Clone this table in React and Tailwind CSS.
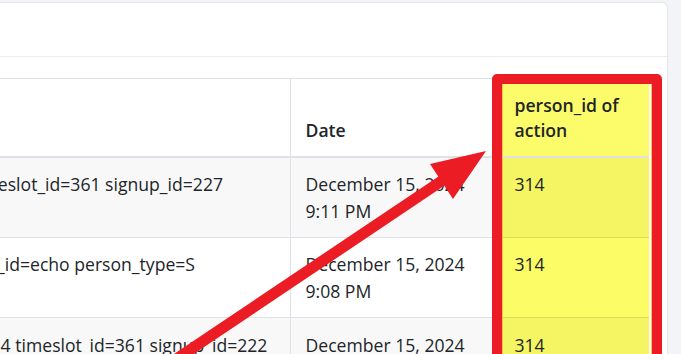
const rows = [
  {
    text: "Unsignup: person_id=314 timeslot_id=361 signup_id=227",
    date: "December 15, 2024",
    time: "9:11 PM",
    pid: "314",
    striped: true,
  },
  {
    text: "Person type changed: person_id=echo person_type=S",
    date: "December 15, 2024",
    time: "9:08 PM",
    pid: "314",
    striped: false,
  },
  {
    text: "Signup created: person_id=314 timeslot_id=361 signup_id=222",
    date: "December 15, 2024",
    time: "9:05 PM",
    pid: "314",
    striped: true,
  },
];

export default function App() {
  return (
    <div className="relative w-[681px] h-[354px] overflow-hidden bg-[#f3f4f7] font-['Open_Sans',sans-serif] text-[#212529]">
      <div className="flex justify-end pt-[2px] pr-[13px]">
        <div className="w-[943px] shrink-0 bg-white border border-[#e4e6ea] rounded-[6px]">
          <div className="h-[54px] border-b border-[#eceef1]" />
          <div className="px-[16px] pt-[21px]">
            <table className="w-[907px] table-fixed border-collapse border-t border-[#dee2e6] text-[17.6px] leading-[26.4px]">
              <colgroup>
                <col className="w-[548px]" />
                <col className="w-[209px]" />
                <col className="w-[150px]" />
              </colgroup>
              <thead>
                <tr>
                  <th className="pl-[16px] pr-[13px] pt-[14px] pb-[14px] align-bottom text-left font-semibold leading-[24.5px] border-b-2 border-[#dee2e6]">
                    Description
                  </th>
                  <th className="pl-[15px] pr-[13px] pt-[14px] pb-[14px] align-bottom text-left font-semibold leading-[24.5px] border-b-2 border-l border-[#dee2e6]">
                    Date
                  </th>
                  <th className="pl-[15px] pr-[13px] pt-[14px] pb-[14px] align-bottom text-left font-semibold leading-[24.5px] border-b-2 border-l border-[#dee2e6] bg-[#fcfc6a]">
                    person_id of
                    <br />
                    action
                  </th>
                </tr>
              </thead>
              <tbody>
                {rows.map((r, i) => (
                  <tr key={i} className={r.striped ? "bg-[#f8f8f8]" : "bg-white"}>
                    <td className="pl-[16px] pr-[13px] py-[13.2px] align-top whitespace-nowrap border-b border-[#dee2e6]">
                      {r.text}
                    </td>
                    <td className="pl-[15px] pr-[13px] py-[13.2px] align-top border-b border-l border-[#dee2e6]">
                      {r.date}
                      <br />
                      {r.time}
                    </td>
                    <td
                      className={
                        r.striped
                          ? "pl-[15px] pr-[13px] py-[13.2px] align-top border-b border-l border-[#dcdc5c] bg-[#f5f563]"
                          : "pl-[15px] pr-[13px] py-[13.2px] align-top border-b border-l border-[#dcdc5c] bg-[#fcfc66]"
                      }
                    >
                      {r.pid}
                    </td>
                  </tr>
                ))}
              </tbody>
            </table>
          </div>
        </div>
      </div>

      {/* annotation: red frame around the person_id column */}
      <div className="absolute left-[492px] top-[74px] w-[170px] h-[320px] border-[10px] border-[#ec1c24] rounded-[5px] shadow-[inset_1px_0_0_#f2c64a,inset_-1px_0_0_#f2c64a]" />

      {/* annotation: arrow pointing at the frame */}
      <svg className="absolute inset-0" width="681" height="354" viewBox="0 0 681 354">
        <line x1="160" y1="370" x2="446" y2="178" stroke="#ec1c24" strokeWidth="11" />
        <polygon points="486,151 430,164 453,199" fill="#ec1c24" />
      </svg>
    </div>
  );
}
